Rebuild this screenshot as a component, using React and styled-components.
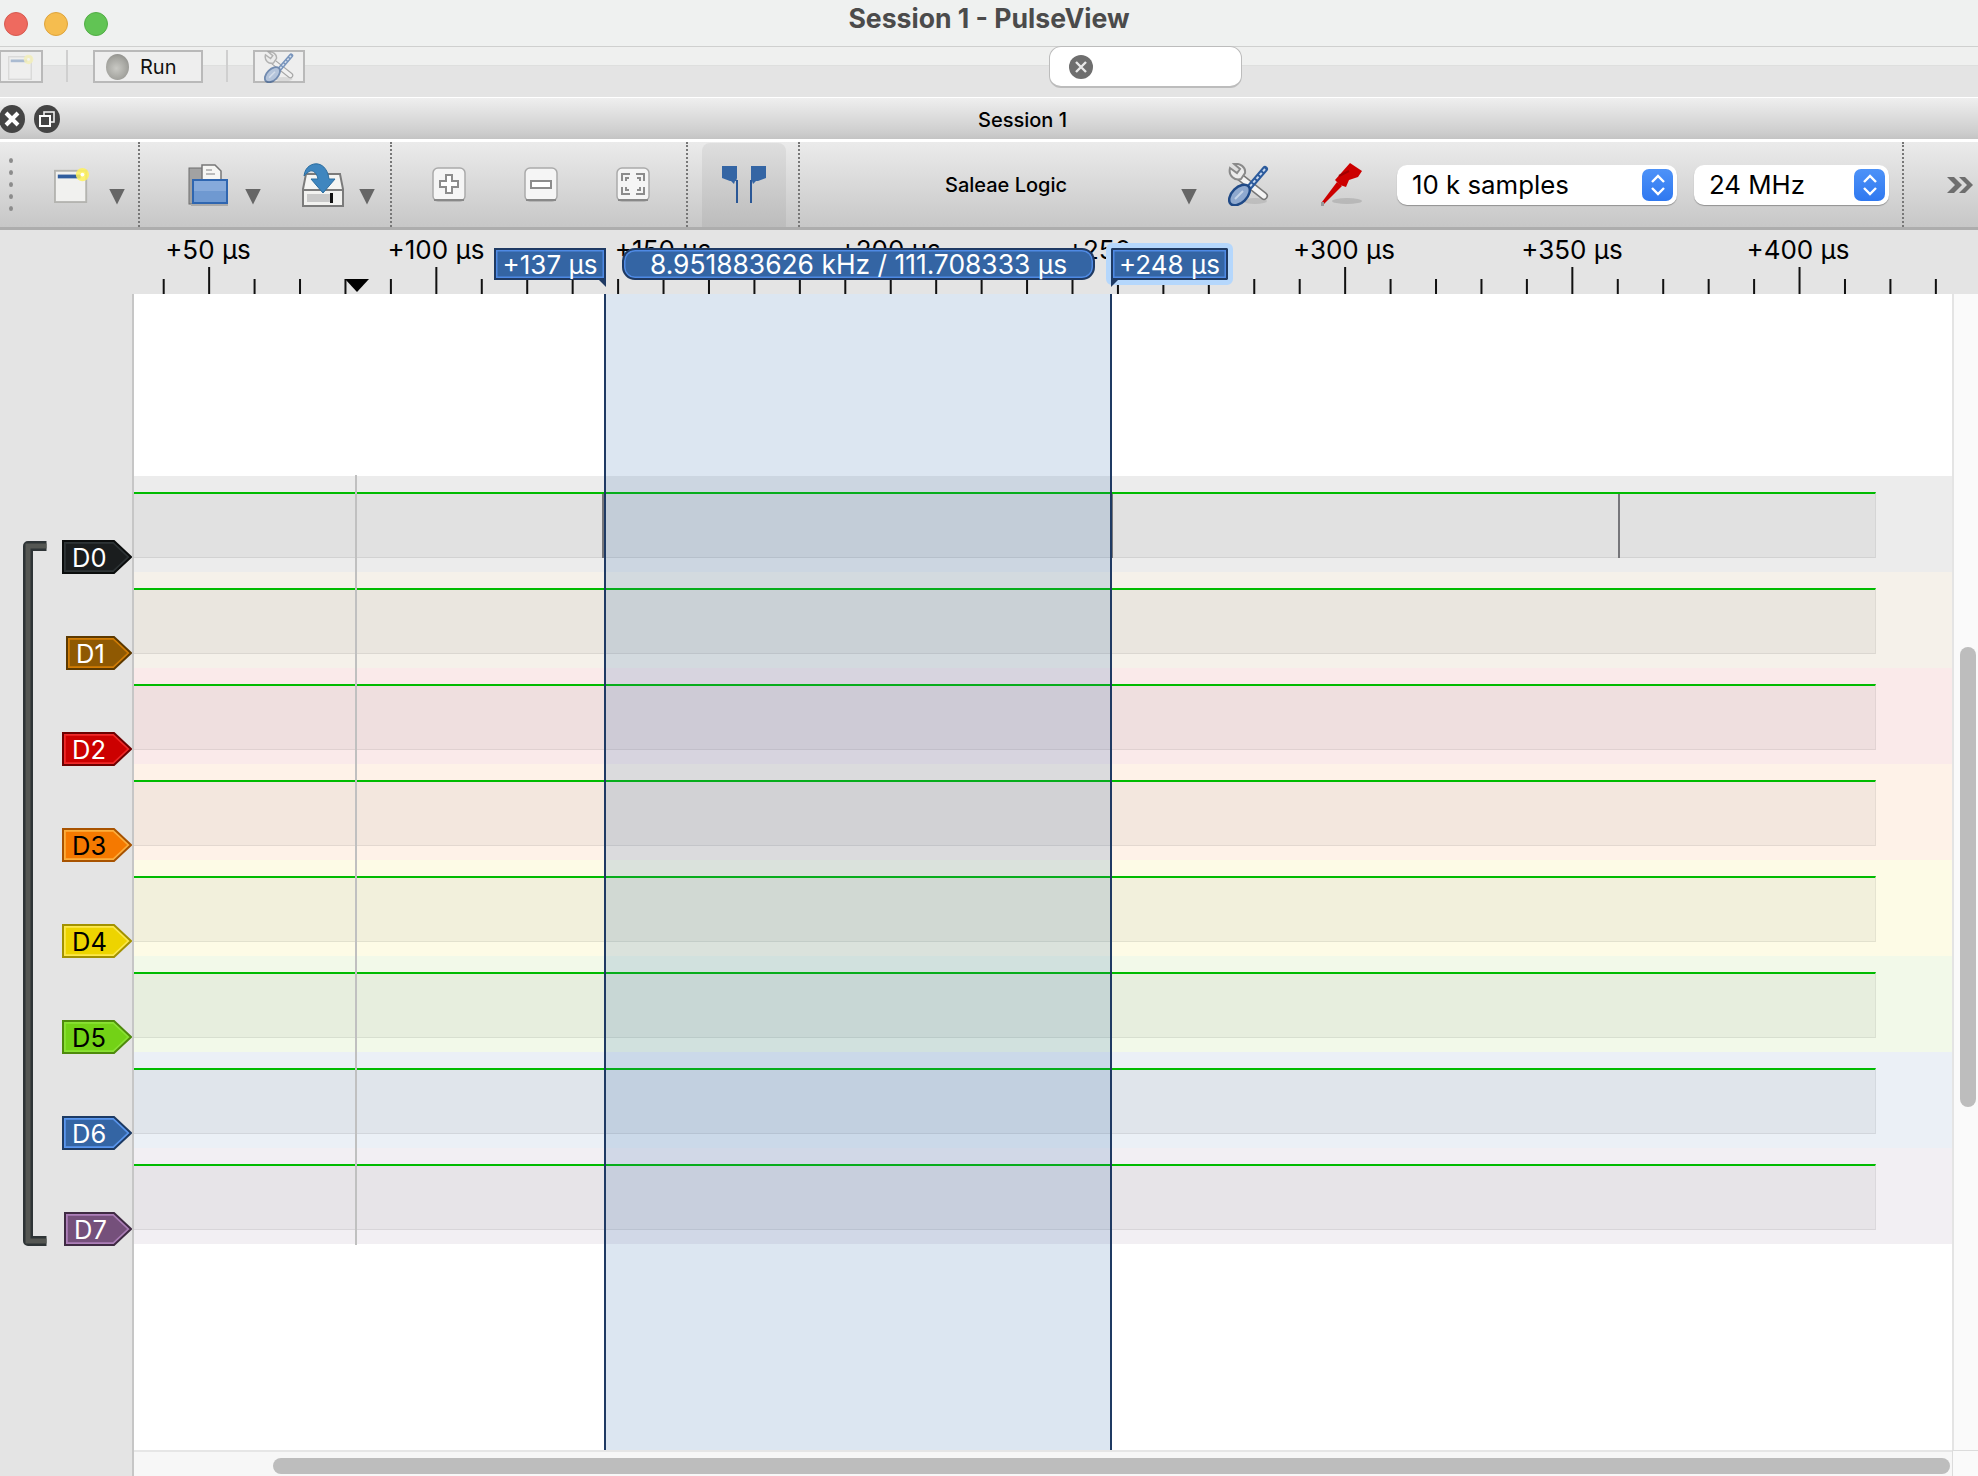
import styled, { createGlobalStyle } from "styled-components";

const GlobalStyle = createGlobalStyle`
  html, body { margin: 0; padding: 0; background: #e4e4e4; }
  * { box-sizing: border-box; }
  body { font-family: Inter, "Liberation Sans", sans-serif; }
`;

const channels = [
  { name: "D0", width: 70, fill: "#1a1d1e", outer: "#0b0d0d", inner: "#2e3436", text: "#fff", band: "#ececec" },
  { name: "D1", width: 66, fill: "#8f5902", outer: "#5c3900", inner: "#d27d05", text: "#fff", band: "#f5f1ea" },
  { name: "D2", width: 70, fill: "#cc0000", outer: "#6e0000", inner: "#ef2929", text: "#fff", band: "#faeaea" },
  { name: "D3", width: 70, fill: "#f57900", outer: "#a85300", inner: "#fcaf3e", text: "#000", band: "#fef2e8" },
  { name: "D4", width: 70, fill: "#edd400", outer: "#a39200", inner: "#fce94f", text: "#000", band: "#fdfbe6" },
  { name: "D5", width: 70, fill: "#73d216", outer: "#4e8a0c", inner: "#8ae234", text: "#000", band: "#f2f9e9" },
  { name: "D6", width: 70, fill: "#3465a4", outer: "#1d3a63", inner: "#5a97ef", text: "#fff", band: "#ebf0f6" },
  { name: "D7", width: 68, fill: "#75507b", outer: "#3f2a43", inner: "#ad7fb8", text: "#fff", band: "#f2eff3" },
];

const tickXs = Array.from({ length: 40 }, (_, i) => 163.7 + i * 45.44);
const rulerLabels = [
  { x: 208, t: "+50 µs" },
  { x: 436, t: "+100 µs" },
  { x: 663, t: "+150 µs" },
  { x: 890, t: "+200 µs" },
  { x: 1117, t: "+250 µs" },
  { x: 1344, t: "+300 µs" },
  { x: 1572, t: "+350 µs" },
  { x: 1798, t: "+400 µs" },
];

const Window = styled.div`
  width: 1978px;
  height: 1476px;
  overflow: hidden;
  display: flex;
  flex-direction: column;
  background: #e4e4e4;
`;

const TitleBar = styled.div`
  height: 47px;
  flex: none;
  display: grid;
  grid-template-columns: 1fr auto 1fr;
  align-items: center;
  padding: 0 0 12px 4px;
  background: #eff1f0;
  border-bottom: 1px solid #cfd0cf;
`;

const Lights = styled.div`
  display: flex;
  gap: 16px;
  padding-top: 12px;
`;

const Light = styled.span`
  width: 24px;
  height: 24px;
  border-radius: 50%;
  background: ${(p) => p.$color};
  border: 1px solid ${(p) => p.$edge};
`;

const WindowTitle = styled.div`
  font-size: 26.6px;
  font-weight: 650;
  color: #4b4b4b;
  padding-right: 4px;
`;

const MainBar = styled.div`
  height: 51px;
  flex: none;
  display: flex;
  align-items: flex-start;
  padding-top: 3px;
  background: linear-gradient(#eff0ef 0, #eff0ef 18px, #dedfde 18px, #dedfde 19px, #e4e4e4 19px);
  border-bottom: 1px solid #fff;
`;

const BarButton = styled.div`
  height: 33px;
  width: ${(p) => p.$w}px;
  margin-left: ${(p) => p.$ml || 0}px;
  padding-left: ${(p) => p.$pl || 0}px;
  display: flex;
  align-items: center;
  justify-content: ${(p) => (p.$pl ? "flex-start" : "center")};
  gap: 11px;
  background: #eeeeee;
  border: 2px solid #b9b9b9;
  font-size: 20px;
  color: #111;
`;

const BarSep = styled.span`
  width: 2px;
  height: 32px;
  margin-left: ${(p) => p.$ml}px;
  background: #cfcfcf;
`;

const Sphere = styled.span`
  width: 23px;
  height: 26px;
  border-radius: 50%;
  background: radial-gradient(circle at 45% 55%, #c9c9c4 0, #a5a5a0 55%, #7d7d7a 100%);
`;

const SearchField = styled.div`
  width: 193px;
  height: 42px;
  margin-left: 744px;
  margin-top: -4px;
  padding-left: 19px;
  display: flex;
  align-items: center;
  background: #fff;
  border: 1px solid #bcbcbc;
  border-bottom-width: 2px;
  border-radius: 12px;
`;

const SessionBar = styled.div`
  height: 44px;
  flex: none;
  display: flex;
  align-items: center;
  position: relative;
  background: linear-gradient(#efefef, #cdcdcd 85%, #c4c4c4);
  border-bottom: 3px solid;
  border-image: linear-gradient(#b2b2b2 66%, #fff 66%) 1;
`;

const SessionLabel = styled.div`
  position: absolute;
  left: 978px;
  top: 10px;
  font-size: 20px;
  font-weight: 500;
  color: #000;
`;

const RoundBadge = styled.span`
  width: 26px;
  height: 28px;
  margin-left: ${(p) => p.$ml}px;
  border-radius: 50%;
  background: #444;
  display: flex;
  align-items: center;
  justify-content: center;
`;

const ToolBar = styled.div`
  height: 88px;
  flex: none;
  display: flex;
  align-items: center;
  background: linear-gradient(#ebebeb, #c7c7c7);
  border-bottom: 3px solid #adadad;
`;

const Section = styled.div`
  height: 100%;
  width: ${(p) => p.$w}px;
  flex: none;
  display: flex;
  align-items: center;
  padding-left: ${(p) => p.$pl || 0}px;
  border-right: ${(p) => (p.$sep ? "2px dotted #777" : "none")};
`;

const Grip = styled.div`
  display: flex;
  flex-direction: column;
  gap: 7px;
  width: 54px;
  padding-left: 9px;
  & > span {
    width: 4px;
    height: 5px;
    border-radius: 50%;
    background: #8c8c8c;
  }
`;

const DropArrow = styled.span`
  width: 16px;
  height: 16px;
  margin-left: ${(p) => p.$ml}px;
  margin-top: 24px;
  flex: none;
  background: #666;
  clip-path: polygon(0 0, 100% 0, 50% 100%);
`;

const Gap = styled.span`
  width: ${(p) => p.$w}px;
  flex: none;
`;

const CursorToggle = styled.div`
  width: 84px;
  height: 84px;
  margin-left: 14px;
  display: flex;
  align-items: center;
  justify-content: center;
  border-radius: 8px 8px 0 0;
  background: linear-gradient(#dedede, #bcbcbc);
`;

const DeviceName = styled.div`
  width: 122px;
  margin-left: 145px;
  font-size: 20px;
  font-weight: 500;
  color: #000;
  white-space: nowrap;
`;

const SelectBox = styled.div`
  width: ${(p) => p.$w}px;
  margin-left: ${(p) => p.$ml}px;
  height: 40px;
  flex: none;
  padding: 0 4px 0 15px;
  display: flex;
  align-items: center;
  justify-content: space-between;
  background: #fff;
  border-radius: 10px;
  box-shadow: 0 1px 1px rgba(0, 0, 0, 0.3);
  font-size: 25.8px;
  color: #000;
`;

const Stepper = styled.span`
  width: 31px;
  height: 32px;
  display: flex;
  align-items: center;
  justify-content: center;
  border-radius: 7px;
  background: linear-gradient(#4d92f8, #2f78f0);
`;

const RulerRow = styled.div`
  height: 64px;
  flex: none;
  position: relative;
  background: #e4e4e4;
`;

const RulerText = styled.text`
  font-size: 26px;
  font-family: Inter, "Liberation Sans", sans-serif;
  fill: #000;
  text-anchor: middle;
`;

const Marker = styled.div`
  position: absolute;
  top: 18px;
  height: 32px;
  left: ${(p) => p.$left}px;
  width: ${(p) => p.$w}px;
  display: flex;
  align-items: center;
  justify-content: center;
  background: #3465a4;
  color: #fff;
  font-size: 26px;
  border: 2px solid #1f3a63;
  box-shadow: inset 0 0 0 1.5px #4f8ae4;
  ${(p) => p.$halo && "outline: 5px solid #b5d7fc; border-radius: 1px;"}
  &::after {
    content: "";
    position: absolute;
    bottom: -9px;
    ${(p) => (p.$side === "left" ? "left: -2px;" : "right: -2px;")}
    width: 9px;
    height: 9px;
    background: #1f3a63;
    clip-path: ${(p) =>
      p.$side === "left" ? "polygon(0 0, 100% 0, 0 100%)" : "polygon(0 0, 100% 0, 100% 100%)"};
  }
`;

const Pill = styled.div`
  position: absolute;
  top: 18px;
  left: 622px;
  width: 473px;
  height: 32px;
  display: flex;
  align-items: center;
  justify-content: center;
  background: #3465a4;
  color: #fff;
  font-size: 26.4px;
  white-space: nowrap;
  border: 2px solid #1f3a63;
  border-radius: 13px;
  box-shadow: inset 0 0 0 1.5px #4f8ae4;
`;

const Workspace = styled.div`
  flex: 1;
  display: grid;
  grid-template-columns: 134px 1818px 26px;
  grid-template-rows: 1156px 26px;
`;

const SidePanel = styled.div`
  grid-row: 1 / 3;
  display: flex;
  align-items: flex-start;
  padding: 246px 0 0 23px;
  background: #e4e4e4;
  border-right: 2px solid #c6c6c6;
`;

const Bracket = styled.svg`
  width: 24px;
  height: 705px;
  flex: none;
  margin-top: 1px;
`;

const FlagColumn = styled.div`
  flex: 1;
  display: flex;
  flex-direction: column;
  align-items: flex-end;
`;

const FlagRow = styled.div`
  height: 96px;
  flex: none;
`;

const FlagBox = styled.div`
  position: relative;
  height: 34px;
  width: ${(p) => p.$w}px;
  padding-left: 10px;
  display: flex;
  align-items: center;
  font-size: 25.5px;
  color: ${(p) => p.$color};
  & > svg {
    position: absolute;
    left: 0;
    top: 0;
  }
  & > span {
    position: relative;
  }
`;

const View = styled.div`
  position: relative;
  background: #fff;
  padding-top: 182px;
  overflow: hidden;
`;

const Band = styled.div`
  height: 96px;
  padding-top: 16px;
  background: ${(p) => p.$bg};
`;

const Trace = styled.div`
  position: relative;
  width: 1742px;
  height: 66px;
  border-top: 2px solid #00bb00;
  background: rgba(0, 0, 0, 0.045);
  border-bottom: 1px solid rgba(0, 0, 0, 0.06);
  border-right: 1px solid rgba(0, 0, 0, 0.05);
`;

const Pulse = styled.span`
  position: absolute;
  top: 0;
  bottom: -1px;
  left: ${(p) => p.$x}px;
  width: 2px;
  background: #76767a;
`;

const TriggerLine = styled.div`
  position: absolute;
  left: 221px;
  top: 181px;
  width: 2px;
  height: 770px;
  background: #c0c0c0;
`;

const Selection = styled.div`
  position: absolute;
  top: 0;
  bottom: 0;
  left: 470px;
  width: 508px;
  background: rgba(45, 105, 170, 0.165);
  border-left: 2px solid #1f3a63;
  border-right: 2px solid #1f3a63;
`;

const VScroll = styled.div`
  position: relative;
  background: #fafafa;
  border-left: 2px solid #e4e4e4;
`;

const VThumb = styled.div`
  position: absolute;
  left: 6px;
  top: 353px;
  width: 16px;
  height: 460px;
  border-radius: 8px;
  background: #bdbdbd;
`;

const HScroll = styled.div`
  position: relative;
  background: #f7f7f7;
  border-top: 2px solid #e6e6e6;
`;

const HThumb = styled.div`
  position: absolute;
  left: 139px;
  top: 6px;
  width: 1677px;
  height: 16px;
  border-radius: 8px;
  background: #bdbdbd;
`;

const Corner = styled.div`
  background: #fafafa;
  border-top: 1px solid #dcdcdc;
  border-left: 1px solid #dcdcdc;
`;

const NewIcon = ({ size = 36, faded }) => (
  <svg width={size} height={size} viewBox="0 0 38 38" opacity={faded ? 0.35 : 1}>
    <rect x="1" y="4" width="33" height="33" fill="#f1f1ef" stroke="#b4b4b0" strokeWidth="2" />
    <rect x="4" y="8" width="24" height="4" fill="#2f5d9e" />
    <circle cx="30" cy="8" r="7" fill="#fff25c" opacity="0.85" />
    <circle cx="30" cy="8" r="2" fill="#fff" />
  </svg>
);

const OpenIcon = () => (
  <svg width="41" height="42" viewBox="0 0 41 42">
    <rect x="1" y="4" width="22" height="36" fill="#a2a2a2" stroke="#6c6c6c" />
    <path d="M14 1h13l6 6v14H14z" fill="#f6f6f4" stroke="#777" strokeWidth="1.5" />
    <path d="M18 6h6M18 10h9" stroke="#bbb" strokeWidth="2" />
    <rect x="4" y="15" width="36" height="25" fill="#2f66b0" />
    <rect x="6" y="17" width="32" height="21" fill="#86aadb" />
    <rect x="6" y="27" width="32" height="11" fill="#6f99d1" />
    <rect x="3" y="40" width="37" height="2" fill="#aaa" />
  </svg>
);

const SaveIcon = () => (
  <svg width="44" height="44" viewBox="0 0 44 44">
    <path d="M2 43V26l3-15h34l3 15v17z" fill="#f5f5f3" stroke="#7b7b7b" strokeWidth="2" />
    <rect x="2" y="27" width="40" height="16" fill="#f2f2f0" stroke="#7b7b7b" strokeWidth="2" />
    <rect x="6" y="31" width="24" height="8" fill="#c9c9c9" />
    <rect x="29" y="30" width="3" height="10" fill="#111" />
    <path
      d="M3 13C4 3 12 0 17 1c6 1 10 7 11 15h6L22 30 10 16h7c-1-6-5-9-8-8-2 1-4 3-6 5z"
      fill="#3f86bf"
      stroke="#2b6d9f"
    />
  </svg>
);

const ZoomButton = ({ kind, ml }) => (
  <svg width="36" height="38" viewBox="0 0 36 38" style={{ marginLeft: ml, flex: "none" }}>
    <rect x="2" y="2" width="32" height="33" rx="5" fill="#f5f5f5" stroke="#aaa" strokeWidth="1.5" />
    <path d="M3 34h30" stroke="#888" strokeWidth="2" />
    {kind === "in" && (
      <path d="M15 9h6v6h6v6h-6v6h-6v-6H9v-6h6z" fill="#fff" stroke="#8c8c8c" strokeWidth="2" />
    )}
    {kind === "out" && <rect x="8" y="15" width="20" height="7" fill="#fff" stroke="#8c8c8c" strokeWidth="2" />}
    {kind === "fit" && (
      <path
        d="M7 15V8h8M21 8h8v7M7 21v7h8M21 28h8v-7M11 15v-3h3M22 12h3v3M11 21v3h3M25 21v3h-3"
        fill="none"
        stroke="#8c8c8c"
        strokeWidth="2"
      />
    )}
  </svg>
);

const CursorIcon = () => (
  <svg width="44" height="37" viewBox="0 0 44 37">
    <path d="M0 0h15v12l-1 3h-1l-1 3-3-3-1 0-8-3z" fill="#3465a4" />
    <path d="M29 0h15v12l-8 3h-2l-3 3-1-3-1 0z" fill="#3465a4" />
    <rect x="14" y="14" width="2" height="23" fill="#2a5796" />
    <rect x="28" y="14" width="2" height="23" fill="#2a5796" />
  </svg>
);

const ToolsIcon = ({ faded, size = 41 }) => (
  <svg width={size} height={size + 2} viewBox="0 0 41 43" opacity={faded ? 0.6 : 1} style={{ flex: "none" }}>
    <ellipse cx="27" cy="38" rx="12" ry="3" fill="#aaa" opacity="0.5" />
    <path d="M12 14 36 33" stroke="#777" strokeWidth="8" strokeLinecap="round" />
    <path d="M12 14 36 33" stroke="#f4f4f4" strokeWidth="5" strokeLinecap="round" />
    <path
      d="M2 5l7 5 3-4-6-5c6-1 12 3 11 9l-4 6c-6 2-13-3-11-11z"
      fill="#ececec"
      stroke="#8a8a8a"
      strokeWidth="2"
    />
    <path d="M37 6 19 27" stroke="#2b5a9c" strokeWidth="6" strokeLinecap="round" />
    <path d="M37 6 19 27" stroke="#c9d9ef" strokeWidth="2" strokeDasharray="3 2" />
    <ellipse cx="11.5" cy="32" rx="12.5" ry="7.5" transform="rotate(-45 11.5 32)" fill="#8fa9cf" stroke="#204a87" strokeWidth="2.5" />
    <path d="M7 36 15 28" stroke="#c4d3e8" strokeWidth="2" />
  </svg>
);

const ProbeIcon = () => (
  <svg width="41" height="44" viewBox="0 0 41 44" style={{ flex: "none" }}>
    <ellipse cx="26" cy="38" rx="15" ry="3" fill="#999" opacity="0.45" />
    <path d="M1 39 16 19l5 4L3 41z" fill="#cc0000" />
    <path d="M14 17 29 0l12 8-4 6-9 3-3 7-6-2z" fill="#cc0000" />
    <path d="M18 13l10-5" stroke="#a00000" strokeWidth="2" />
    <rect x="0" y="39" width="3" height="4" fill="#999" />
  </svg>
);

const StepArrows = () => (
  <svg width="16" height="24" viewBox="0 0 16 24">
    <path d="M2 9l6-6 6 6M2 15l6 6 6-6" fill="none" stroke="#fff" strokeWidth="2.4" />
  </svg>
);

const ClearIcon = () => (
  <svg width="24" height="24" viewBox="0 0 24 24">
    <circle cx="12" cy="12" r="12" fill="#6e6e6e" />
    <path d="M7 7l10 10M17 7 7 17" stroke="#e8e8e8" strokeWidth="2.4" />
  </svg>
);

const ChannelFlag = ({ ch }) => {
  const w = ch.width;
  const outer = `1,1 ${w - 18},1 ${w - 1},17 ${w - 18},33 1,33`;
  const inner = `3.5,3.5 ${w - 19},3.5 ${w - 4.5},17 ${w - 19},30.5 3.5,30.5`;
  return (
    <FlagBox $w={w} $color={ch.text}>
      <svg width={w} height="34" viewBox={`0 0 ${w} 34`}>
        <polygon points={outer} fill={ch.inner} stroke={ch.outer} strokeWidth="2" />
        <polygon points={inner} fill={ch.fill} stroke={ch.inner} strokeWidth="0.5" />
      </svg>
      <span>{ch.name}</span>
    </FlagBox>
  );
};

const App = () => {
  return (
    <Window>
      <GlobalStyle />
      <TitleBar>
        <Lights>
          <Light $color="#ee6a5f" $edge="#d65a50" />
          <Light $color="#f5bd4f" $edge="#dea43c" />
          <Light $color="#61c454" $edge="#52ad46" />
        </Lights>
        <WindowTitle>Session 1 - PulseView</WindowTitle>
      </TitleBar>

      <MainBar>
        <BarButton $w={44} $ml={-1}>
          <NewIcon size={26} faded />
        </BarButton>
        <BarSep $ml={23} />
        <BarButton $w={110} $ml={25} $pl={11}>
          <Sphere />
          <span>Run</span>
        </BarButton>
        <BarSep $ml={23} />
        <BarButton $w={52} $ml={25}>
          <ToolsIcon faded size={30} />
        </BarButton>
        <SearchField>
          <ClearIcon />
        </SearchField>
      </MainBar>

      <SessionBar>
        <RoundBadge $ml={-1}>
          <svg width="16" height="16" viewBox="0 0 16 16">
            <path d="M2 2l12 12M14 2 2 14" stroke="#fff" strokeWidth="4" />
          </svg>
        </RoundBadge>
        <RoundBadge $ml={9}>
          <svg width="16" height="16" viewBox="0 0 16 16">
            <rect x="5" y="1" width="10" height="10" fill="none" stroke="#eee" strokeWidth="1.6" />
            <rect x="1" y="5" width="10" height="10" fill="#444" stroke="#fff" strokeWidth="2" />
          </svg>
        </RoundBadge>
        <SessionLabel>Session 1</SessionLabel>
      </SessionBar>

      <ToolBar>
        <Section $w={140} $sep>
          <Grip>
            <span />
            <span />
            <span />
            <span />
            <span />
          </Grip>
          <NewIcon />
          <DropArrow $ml={19} />
        </Section>
        <Section $w={252} $sep $pl={48}>
          <OpenIcon />
          <DropArrow $ml={16} />
          <Gap $w={40} />
          <SaveIcon />
          <DropArrow $ml={14} />
        </Section>
        <Section $w={296} $sep>
          <ZoomButton kind="in" ml={39} />
          <ZoomButton kind="out" ml={56} />
          <ZoomButton kind="fit" ml={56} />
        </Section>
        <Section $w={112} $sep>
          <CursorToggle>
            <CursorIcon />
          </CursorToggle>
        </Section>
        <Section $w={1104} $sep>
          <DeviceName>Saleae Logic</DeviceName>
          <DropArrow $ml={114} />
          <Gap $w={31} />
          <ToolsIcon />
          <Gap $w={52} />
          <ProbeIcon />
          <SelectBox $w={280} $ml={35}>
            10 k samples
            <Stepper>
              <StepArrows />
            </Stepper>
          </SelectBox>
          <SelectBox $w={195} $ml={17}>
            24 MHz
            <Stepper>
              <StepArrows />
            </Stepper>
          </SelectBox>
        </Section>
        <svg width="28" height="18" viewBox="0 0 28 18" style={{ marginLeft: 42 }}>
          <path d="M1 1h7l8 8-8 8H1l8-8zM13 1h6l8 8-8 8h-6l8-8z" fill="#6e6e6e" />
        </svg>
      </ToolBar>

      <RulerRow>
        <svg width="1978" height="64" viewBox="0 0 1978 64" style={{ display: "block" }}>
          {rulerLabels.map((l) => (
            <RulerText key={l.t} x={l.x} y={29}>
              {l.t}
            </RulerText>
          ))}
          {tickXs.map((x, i) => (
            <rect key={i} x={x - 1} y={i % 5 === 1 ? 37 : 49} width="2" height={i % 5 === 1 ? 27 : 15} fill="#111" />
          ))}
          <polygon points="345,49 369,49 357,62" fill="#000" />
        </svg>
        <Marker $left={494} $w={112} $side="right">
          +137 µs
        </Marker>
        <Pill>8.951883626 kHz / 111.708333 µs</Pill>
        <Marker $left={1111} $w={117} $side="left" $halo>
          +248 µs
        </Marker>
      </RulerRow>

      <Workspace>
        <SidePanel>
          <Bracket viewBox="0 0 24 705">
            <path d="M23.5 5H5v695h18.5" fill="none" stroke="#2e3436" strokeWidth="10" strokeLinejoin="round" />
            <path d="M23.5 5H5v695h18.5" fill="none" stroke="#555753" strokeWidth="5" />
          </Bracket>
          <FlagColumn>
            {channels.map((ch) => (
              <FlagRow key={ch.name}>
                <ChannelFlag ch={ch} />
              </FlagRow>
            ))}
          </FlagColumn>
        </SidePanel>

        <View>
          {channels.map((ch, i) => (
            <Band key={ch.name} $bg={ch.band}>
              <Trace>
                {i === 0 && (
                  <>
                    <Pulse $x={468} />
                    <Pulse $x={977} />
                    <Pulse $x={1484} />
                  </>
                )}
              </Trace>
            </Band>
          ))}
          <TriggerLine />
          <Selection />
        </View>

        <VScroll>
          <VThumb />
        </VScroll>
        <HScroll>
          <HThumb />
        </HScroll>
        <Corner />
      </Workspace>
    </Window>
  );
};

export default App;
